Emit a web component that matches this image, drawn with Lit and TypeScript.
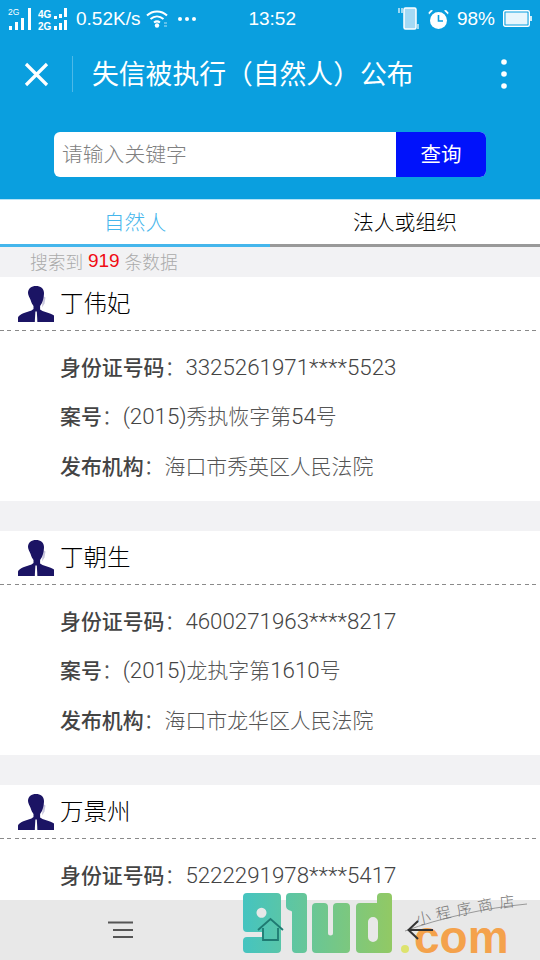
import { LitElement, html, css } from "lit";
import { customElement } from "lit/decorators.js";

const people = [
  { name: "丁伟妃", rows: [["身份证号码", "3325261971****5523"], ["案号", "(2015)秀执恢字第54号"], ["发布机构", "海口市秀英区人民法院"]] },
  { name: "丁朝生", rows: [["身份证号码", "4600271963****8217"], ["案号", "(2015)龙执字第1610号"], ["发布机构", "海口市龙华区人民法院"]] },
  { name: "万景州", rows: [["身份证号码", "5222291978****5417"]] },
];

const latin = (s: string) =>
  s.split(/([\x20-\x7e]+)/).map((part, i) => (i % 2 ? html`<span class="num">${part}</span>` : part));

const avatar = html`<svg class="avatar" viewBox="0 0 36 36" width="36" height="36">
  <path fill="#c9c7dd" d="M25 10l2.500 1.500-1 6-2.500 4z"/>
  <path fill="#1b1464" d="M10 7c0-4.500 3.500-7 8-7s8 2.500 8 7c0 2.500-.5 5-1 7-.6 2.500-1.900 4.500-2.900 6v3.500l2.400 1.500 7.500 2.500c3.500 1.200 5.500 3 6 4.500V36H0v-4.500c.5-1.500 2.500-3.300 6-4.500l7.500-2.500 2-1.500V20c-1-1.500-2.300-3.500-2.900-6-.6-2-2.600-4.500-2.600-7Z"/>
  <path fill="#fff" d="M17.400 25.500h1.400l.6 10.500h-2.600z"/>
</svg>`;

@customElement("app-root")
export class AppRoot extends LitElement {
  static styles = css`
    :host { display: flex; flex-direction: column; width: 540px; height: 960px; overflow: hidden; position: relative;
      background: #f2f2f4; font-family: "Liberation Sans", "Noto Sans CJK SC", sans-serif; }
    .head { background: #0a9fdf; color: #fff; height: 199px; flex: none; display: flex; flex-direction: column; }
    .status { height: 38px; display: flex; align-items: center; padding: 0 8px; font-size: 19px; box-sizing: border-box; }
    .status svg { display: block; flex: none; }
    .sig2 { margin-left: 6px; }
    .speed { margin-left: 6px; }
    .wifi { margin-left: 6px; }
    .dots { margin-left: 9px; }
    .clock { margin-left: 51px; font-size: 19px; }
    .right { margin-left: auto; display: flex; align-items: center; }
    .alarm { margin-left: 8px; }
    .pct { margin: 0 8px 0 8px; }
    .nav { height: 72px; display: flex; align-items: center; }
    .close { margin-left: 24px; }
    .sep { width: 1px; height: 36px; background: #4db9e8; margin-left: 23px; }
    .title { margin-left: 19px; font-size: 26.800px; font-weight: 400; white-space: nowrap; padding-bottom: 4px; }
    .more { margin-left: auto; margin-right: 32px; }
    .search { display: flex; margin: 22px 54px 0; height: 45px; border-radius: 6px; overflow: hidden; background: #fff; }
    .input { flex: 1; display: flex; align-items: center; padding: 0 0 4px 8px; color: #808080; font-size: 20.800px; font-weight: 300; }
    .btn { width: 90px; background: #0012fb; display: flex; align-items: center; justify-content: center; font-size: 20.500px; font-weight: 400; padding-bottom: 4px; box-sizing: border-box; }
    .tabs { display: flex; height: 48px; background: #fff; flex: none; border-top: 1px solid #b5e3f6; box-sizing: border-box; }
    .tab { flex: 1; display: flex; align-items: center; justify-content: center; font-size: 20.800px; color: #000; font-weight: 300;
      border-bottom: 3px solid #999; padding-bottom: 3px; }
    .tab.on { color: #45b6ec; border-bottom-color: #45b6ec; }
    .count { height: 30px; flex: none; display: flex; align-items: center; padding: 0 0 2px 30px; box-sizing: border-box; font-size: 17.700px; color: #aaa; font-weight: 300; white-space: pre; }
    .count b { color: #f00c14; font-weight: 400; font-size: 19px; }
    .list { flex: 1; min-height: 0; overflow: hidden; display: flex; flex-direction: column; gap: 30px; }
    .card { background: #fff; flex: none; height: 224px; }
    .who { height: 54px; box-sizing: border-box; display: flex; align-items: center; padding: 0 0 4px 18px; font-size: 23.500px; color: #000; font-weight: 300;
      background: repeating-linear-gradient(90deg, #8a8a8a 0 4px, transparent 4px 7.500px) left bottom / 100% 1px no-repeat; }
    .who span { margin-left: 6px; }
    .avatar { display: block; margin-top: 4px; }
    .rows { padding-top: 10px; padding-left: 60px; }
    .row { height: 49.500px; display: flex; align-items: center; font-size: 20.900px; color: #555; font-weight: 300; white-space: pre; }
    .row b { font-weight: 500; color: #444; }
    .num { font-family: Roboto, "Liberation Sans", sans-serif; font-size: 22.300px; font-weight: 300; color: #444; position: relative; top: 1px; }
    .colon { color: #555; }
    .foot { height: 60px; flex: none; background: #e8e8e8; }
    .mark { position: absolute; left: 0; bottom: 0; pointer-events: none; }
    .com { font: 700 46px "Liberation Sans", sans-serif; fill: #f4a24c; }
    .sign { font: 300 15px "Noto Sans CJK SC", sans-serif; fill: #777; }
  `;

  render() {
    return html`
      <div class="head">
        <div class="status">
          <svg width="24" height="24" viewBox="0 0 24 24" fill="#fff">
            <text x="0" y="8" font-size="8.500" font-family="Liberation Sans" fill="#fff">2G</text>
            <rect x="1" y="19" width="3" height="4"/><rect x="7" y="15" width="3" height="8"/><rect x="13" y="11" width="3" height="12"/><rect x="20" y="1" width="3" height="22"/>
          </svg>
          <svg class="sig2" width="32" height="24" viewBox="0 0 32 24" fill="#fff">
            <text x="0" y="10.500" font-size="10" font-weight="700" font-family="Liberation Sans" fill="#fff">4G</text>
            <text x="0" y="22.500" font-size="10" font-weight="700" font-family="Liberation Sans" fill="#fff">2G</text>
            <rect x="16" y="19" width="3" height="4"/><rect x="16" y="9" width="3" height="3"/>
            <rect x="21" y="16" width="3" height="7"/><rect x="21" y="7" width="3" height="4"/>
            <rect x="26" y="13" width="3" height="10"/><rect x="26" y="1" width="3" height="9"/>
          </svg>
          <span class="speed">0.52K/s</span>
          <svg class="wifi" width="22" height="20" viewBox="0 0 22 20" fill="none" stroke="#fff" stroke-width="2">
            <path d="M1 6.500C6.500 1 15.500 1 21 6.500M4.500 10c4-3.500 9-3.500 13 0M8 13.500c2-1.500 4-1.500 6 0"/>
            <circle cx="11" cy="16.500" r="2.200" fill="#fff" stroke="none"/>
            <path d="M18 14h3M18 17h3" stroke-width="1" opacity=".7"/>
          </svg>
          <svg class="dots" width="20" height="6" viewBox="0 0 20 6" fill="#fff"><circle cx="3" cy="3" r="2"/><circle cx="10" cy="3" r="2"/><circle cx="17" cy="3" r="2"/></svg>
          <span class="clock">13:52</span>
          <div class="right">
            <svg width="22" height="24" viewBox="0 0 22 24" fill="none">
              <rect x="6" y="1" width="12" height="21" rx="1.500" fill="#a5d9f4" stroke="#fff" stroke-width="1.500"/>
              <path d="M1 1v5M4 1v5M20 17v5" stroke="#fff" stroke-width="1.200"/>
            </svg>
            <svg class="alarm" width="21" height="21" viewBox="0 0 21 21" fill="#fff">
              <circle cx="10.500" cy="11.500" r="8.500"/>
              <path d="M1 5.500 5 1.500 3 1 .5 3.500zM20 5.500 16 1.500 18 1l2.500 2.500z"/>
              <path d="M10.500 6v6h4.500" fill="none" stroke="#0a9fdf" stroke-width="1.600"/>
            </svg>
            <span class="pct">98%</span>
            <svg width="29" height="18" viewBox="0 0 29 18">
              <rect x=".7" y=".7" width="25.600" height="15.600" rx="1.500" fill="none" stroke="#fff" stroke-width="1.400"/>
              <rect x="2.500" y="2.500" width="22" height="12" fill="#e8f6fd"/>
              <rect x="27.200" y="6" width="1.600" height="5" fill="#fff"/>
            </svg>
          </div>
        </div>
        <div class="nav">
          <svg class="close" width="25" height="25" viewBox="0 0 25 25" stroke="#fff" stroke-width="3.200"><path d="M2 2 23 23M23 2 2 23"/></svg>
          <div class="sep"></div>
          <div class="title">失信被执行（自然人）公布</div>
          <svg class="more" width="8" height="32" viewBox="0 0 8 32" fill="#fff"><circle cx="4" cy="4" r="2.800"/><circle cx="4" cy="16" r="2.800"/><circle cx="4" cy="28" r="2.800"/></svg>
        </div>
        <div class="search">
          <div class="input">请输入关键字</div>
          <div class="btn">查询</div>
        </div>
      </div>
      <div class="tabs">
        <div class="tab on">自然人</div>
        <div class="tab">法人或组织</div>
      </div>
      <div class="count">搜索到 <b>919</b> 条数据</div>
      <div class="list">
        ${people.map((p) => html`
          <div class="card">
            <div class="who">${avatar}<span>${p.name}</span></div>
            <div class="rows">
              ${p.rows.map(([k, v]) => html`<div class="row"><b>${k}</b><span class="colon">：</span>${latin(v)}</div>`)}
            </div>
          </div>`)}
      </div>
      <div class="foot"></div>
      <svg class="mark" width="540" height="80" viewBox="0 880 540 80">
        <defs>
          <linearGradient id="g" gradientUnits="userSpaceOnUse" x1="243" y1="0" x2="392" y2="0">
            <stop offset="0" stop-color="#45c4c0"/><stop offset="1" stop-color="#92c964"/>
          </linearGradient>
        </defs>
        <g fill="url(#g)">
          <path fill-rule="evenodd" d="M247 893h30a4 4 0 0 1 4 4v52a4 4 0 0 1-4 4h-30a4 4 0 0 1-4-4v-8a4 4 0 0 1 4-4h15v-5h-15a4 4 0 0 1-4-4v-31a4 4 0 0 1 4-4Zm14.500 14.800a5 5 0 1 0 .01 0Z"/>
          <path d="M290 893h13a4 4 0 0 1 4 4v52a4 4 0 0 1-4 4h-7a4 4 0 0 1-4-4v-37c0-2-6-1-6-6v-9a4 4 0 0 1 4-4Z"/>
          <path d="M316 903h8a4 4 0 0 1 4 4v26a2.500 2.500 0 0 0 5 0v-26a4 4 0 0 1 4-4h9a4 4 0 0 1 4 4v42a4 4 0 0 1-4 4h-30a4 4 0 0 1-4-4v-42a4 4 0 0 1 4-4Z"/>
          <path fill-rule="evenodd" d="M381 893h7a4 4 0 0 1 4 4v52a4 4 0 0 1-4 4h-28a4 4 0 0 1-4-4v-42a4 4 0 0 1 4-4h17v-6a4 4 0 0 1 4-4Zm-8 24a5 5 0 0 0-5 5v15a5 5 0 0 0 10 0v-15a5 5 0 0 0-5-5Z"/>
        </g>
        <circle cx="405" cy="949" r="4" fill="#dde36e"/>
        <text class="com" x="414" y="953">com</text>
        <path d="M405 931C440 918 485 908 527 904" fill="none" stroke="#999" stroke-width="1"/>
        <text class="sign" transform="translate(417 925) rotate(-12)">小</text>
        <text class="sign" transform="translate(437 920) rotate(-12)">程</text>
        <text class="sign" transform="translate(458 916) rotate(-12)">序</text>
        <text class="sign" transform="translate(479 912) rotate(-12)">商</text>
        <text class="sign" transform="translate(500 908) rotate(-6)">店</text>
        <g fill="none" stroke="#555" stroke-width="2">
          <path d="M108 922.500h25M113 930h20M113 937h20"/>
        </g>
        <g fill="none" stroke="#1f7a72" stroke-width="1.800">
          <path d="M258 930l12.500-11 12.500 11M263 928v12h15v-12"/>
        </g>
        <path d="M433 930h-24M418 921l-9.500 9 9.500 9" fill="none" stroke="#333" stroke-width="2"/>
      </svg>
    `;
  }
}
